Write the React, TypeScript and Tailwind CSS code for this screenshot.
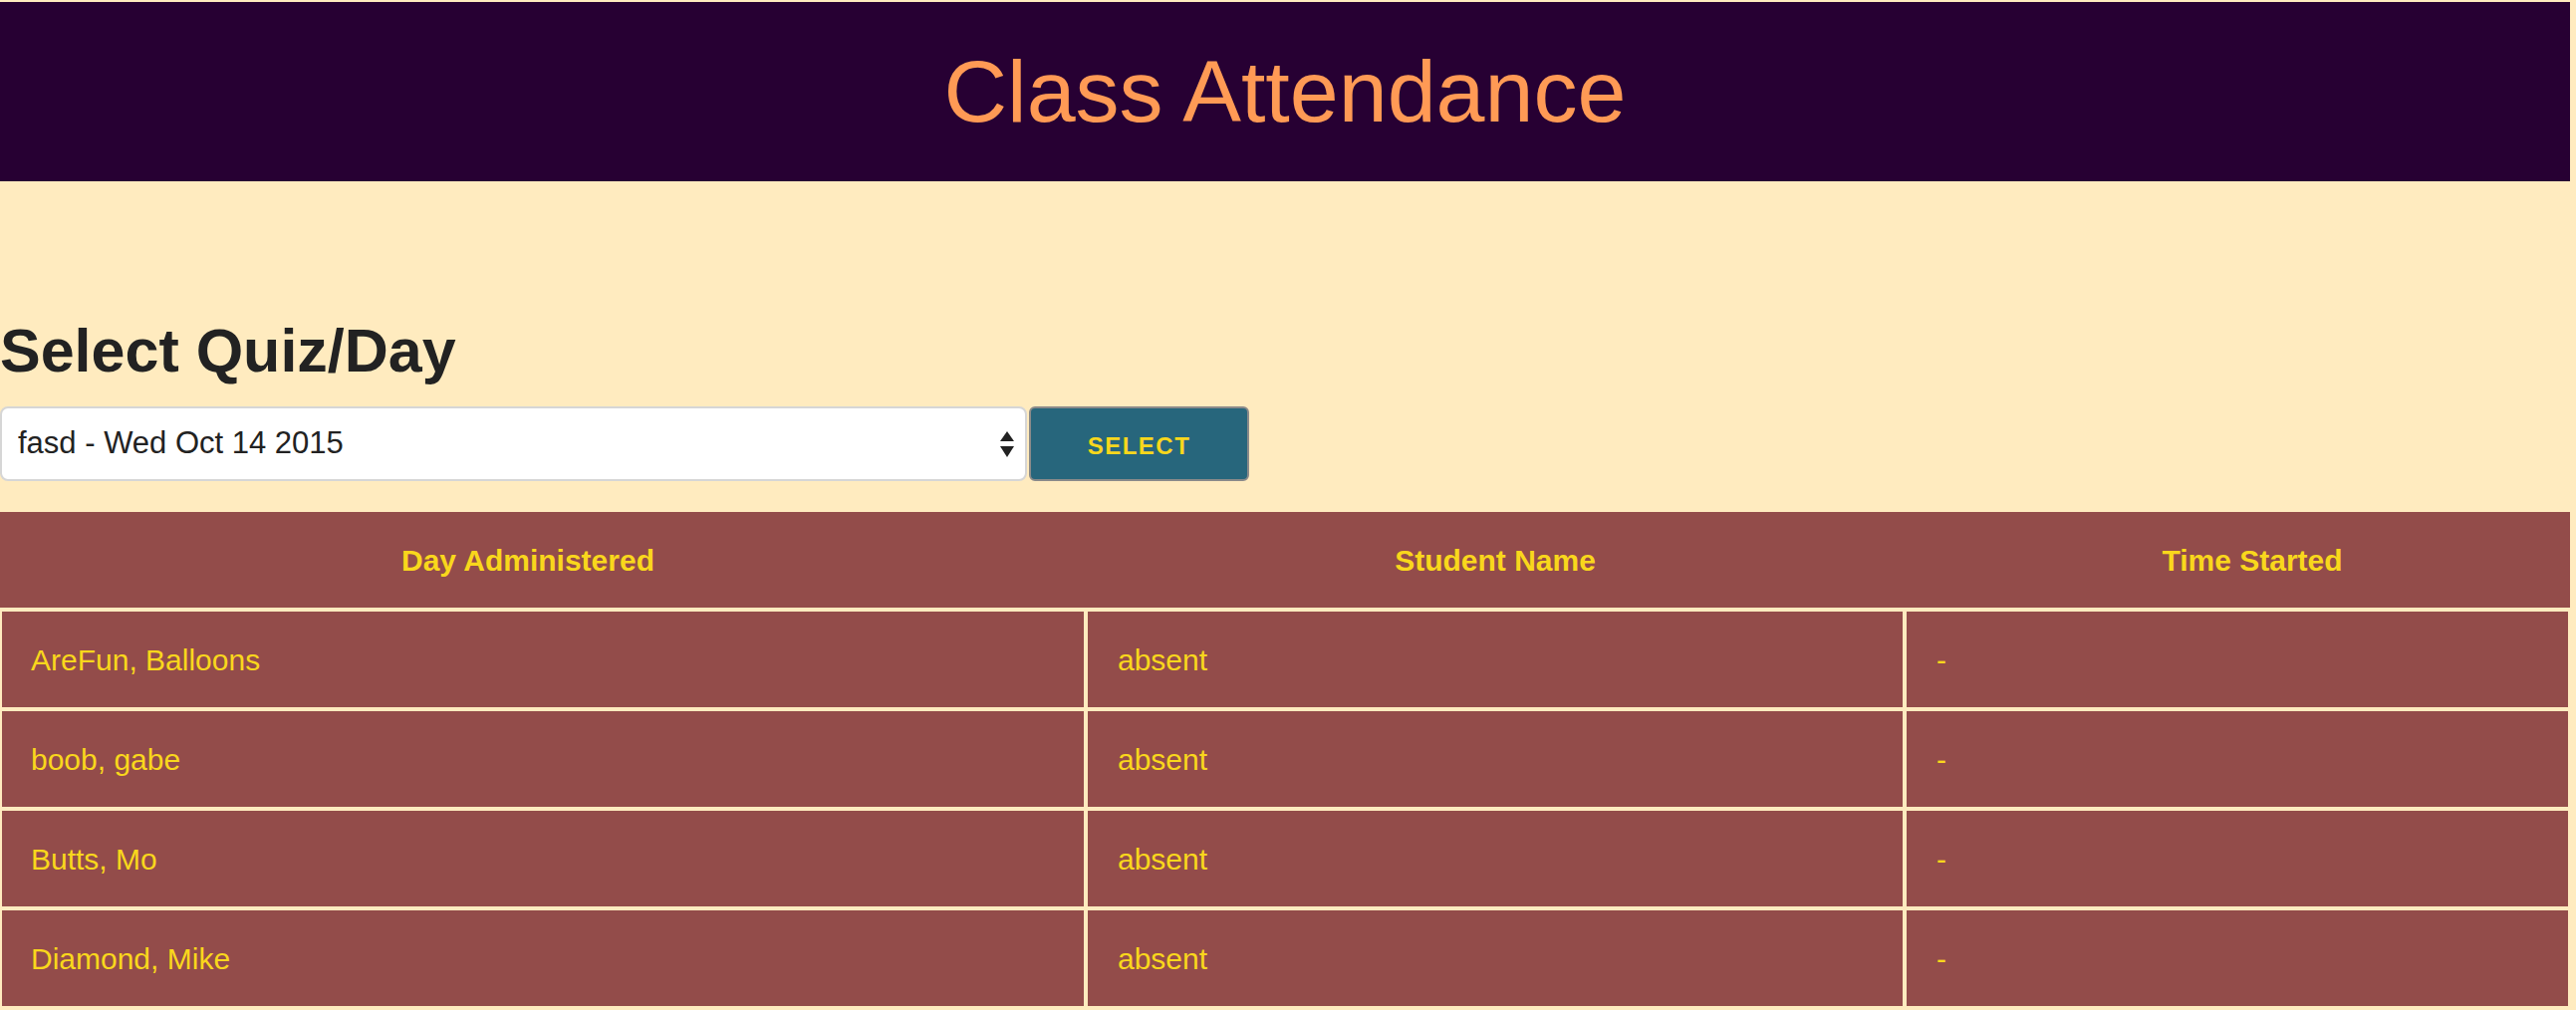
import { FC } from "react";

type AttendanceRow = {
  name: string;
  status: string;
  started: string;
};

const rows: AttendanceRow[] = [
  { name: "AreFun, Balloons", status: "absent", started: "-" },
  { name: "boob, gabe", status: "absent", started: "-" },
  { name: "Butts, Mo", status: "absent", started: "-" },
  { name: "Diamond, Mike", status: "absent", started: "-" },
];

const SelectArrows: FC = () => (
  <svg width="14" height="26" viewBox="0 0 14 26" fill="#222">
    <path d="M7 0 L14 10 L0 10 Z" />
    <path d="M0 15 L14 15 L7 26 Z" />
  </svg>
);

const App: FC = () => {
  return (
    <div className="min-h-screen bg-[#ffebbf] pr-[6px] pt-[2px] font-['Liberation_Sans',Arial,sans-serif]">
      {/* header */}
      <header className="flex h-[180px] items-center justify-center bg-[#270033]">
        <h1 className="text-[88px] leading-none text-[#ff9a55]">
          Class Attendance
        </h1>
      </header>

      {/* quiz picker */}
      <section className="pt-[138px]">
        <h2 className="text-[61px] font-bold leading-[64px] text-[#222]">
          Select Quiz/Day
        </h2>
        <div className="mt-[24px] flex items-center gap-[2px]">
          <div className="relative w-[1031px]">
            <select
              defaultValue="fasd"
              className="h-[75px] w-full appearance-none rounded-[8px] border-2 border-[#d6d6d6] bg-white pl-[16px] text-[31px] text-[#222] outline-0"
            >
              <option value="fasd">fasd - Wed Oct 14 2015</option>
            </select>
            <span className="pointer-events-none absolute right-[13px] top-[25px]">
              <SelectArrows />
            </span>
          </div>
          <button className="h-[75px] w-[221px] rounded-[6px] border-2 border-[#8a8a8a] bg-[#27667c] pt-[4px] text-[24px] font-bold tracking-[1.5px] text-[#f9d71c]">
            SELECT
          </button>
        </div>
      </section>

      {/* attendance table */}
      <table className="mt-[31px] w-full table-fixed border-separate border-spacing-0 bg-[#934c4a] text-[#f9d71c]">
        <colgroup>
          <col className="w-[1090px]" />
          <col className="w-[822px]" />
          <col />
        </colgroup>
        <thead>
          <tr>
            <th className="h-[98px] border-b-2 border-[#ffebbf] pr-[30px] text-center text-[30px] font-bold">
              Day Administered
            </th>
            <th className="h-[98px] border-b-2 border-[#ffebbf] text-center text-[30px] font-bold">
              Student Name
            </th>
            <th className="h-[98px] border-b-2 border-[#ffebbf] pl-[30px] text-center text-[30px] font-bold">
              Time Started
            </th>
          </tr>
        </thead>
        <tbody>
          {rows.map((row) => (
            <tr key={row.name}>
              <td className="h-[100px] border-2 border-[#ffebbf] px-[29px] text-[30px]">
                {row.name}
              </td>
              <td className="h-[100px] border-2 border-[#ffebbf] px-[30px] text-[30px]">
                {row.status}
              </td>
              <td className="h-[100px] border-2 border-[#ffebbf] px-[30px] text-[30px]">
                {row.started}
              </td>
            </tr>
          ))}
        </tbody>
      </table>
    </div>
  );
};

export default App;
